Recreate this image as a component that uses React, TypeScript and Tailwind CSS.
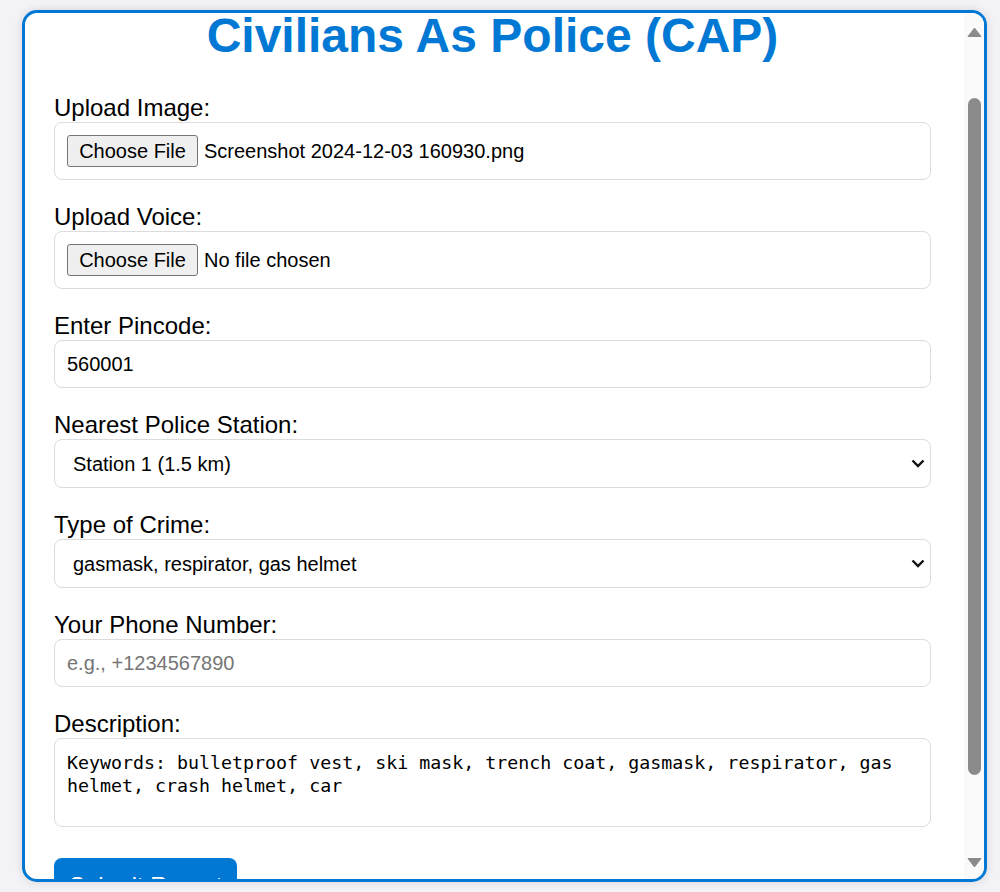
import { useLayoutEffect, useRef } from "react";

const label = "block text-[24px] leading-[28px] text-black";
const box = "w-full border border-[#dcdcdc] rounded-[8px] bg-white text-black outline-none";

function FileField({ name, file }: { name: string; file: string }) {
  return (
    <div>
      <label className={label}>{name}</label>
      <div className={`${box} text-[20px] h-[58px] flex items-center px-[12px] mb-[23px]`}>
        <span className="h-[32px] w-[131px] flex items-center justify-center bg-[#efefef] border border-[#767676] rounded-[3px] text-[20px] text-black">
          Choose File
        </span>
        <span className="ml-[6px] text-[20px]">{file}</span>
      </div>
    </div>
  );
}

function SelectField({ name, value }: { name: string; value: string }) {
  return (
    <div>
      <label className={label}>{name}</label>
      <div className="relative mb-[23px]">
        <select
          defaultValue={value}
          className={`${box} text-[20px] h-[49px] appearance-none pl-[18px] pr-[40px]`}
        >
          <option>{value}</option>
        </select>
        <svg
          className="absolute right-[6px] top-[20px] pointer-events-none"
          width="14"
          height="9"
          viewBox="0 0 14 9"
        >
          <path d="M1.5 1.5 L7 7 L12.5 1.5" fill="none" stroke="#111" strokeWidth="2.4" />
        </svg>
      </div>
    </div>
  );
}

function ScrollBar() {
  return (
    <div className="w-[20px] shrink-0 bg-[#fafafa] flex flex-col items-center">
      <div className="h-[37px] flex items-center">
        <svg width="15" height="10" viewBox="0 0 15 10">
          <path d="M7.5 1 L14 9.5 L1 9.5 Z" fill="#8b8b8b" stroke="#8b8b8b" strokeLinejoin="round" />
        </svg>
      </div>
      <div className="flex-1 w-full flex justify-center">
        <div className="mt-[48px] w-[13px] h-[677px] rounded-full bg-[#8b8b8b]" />
      </div>
      <div className="h-[33px] flex items-center">
        <svg width="15" height="10" viewBox="0 0 15 10">
          <path d="M1 0.5 L14 0.5 L7.5 9 Z" fill="#8b8b8b" stroke="#8b8b8b" strokeLinejoin="round" />
        </svg>
      </div>
    </div>
  );
}

export default function App() {
  const ref = useRef<HTMLDivElement>(null);
  useLayoutEffect(() => {
    if (ref.current) ref.current.scrollTop = 87;
  }, []);

  return (
    <div className="min-h-screen bg-[#f3f3f7] pt-[10px] pl-[22px] font-['Liberation_Sans',Arial,sans-serif]">
      <div className="w-[965px] h-[872px] flex bg-white border-[3px] border-[#0078d4] rounded-[15px] overflow-hidden shadow-[0_0_10px_rgba(0,0,0,0.12)]">
        <div ref={ref} className="flex-1 h-full overflow-hidden">
          <div className="pt-[50px] pb-[64px] pl-[29px] pr-[33px]">
            <h1 className="mt-[32px] mb-[31px] text-center text-[48px] leading-[55px] font-bold text-[#0078d4]">
              Civilians As Police (CAP)
            </h1>

            <FileField name="Upload Image:" file="Screenshot 2024-12-03 160930.png" />
            <FileField name="Upload Voice:" file="No file chosen" />

            <label className={label}>Enter Pincode:</label>
            <input
              className={`${box} text-[20px] h-[48px] px-[12px] mb-[23px]`}
              defaultValue="560001"
            />

            <SelectField name="Nearest Police Station:" value="Station 1 (1.5 km)" />
            <SelectField name="Type of Crime:" value="gasmask, respirator, gas helmet" />

            <label className={label}>Your Phone Number:</label>
            <input
              className={`${box} text-[20px] h-[48px] px-[12px] mb-[23px] placeholder:text-[#767676]`}
              placeholder="e.g., +1234567890"
            />

            <label className={label}>Description:</label>
            <textarea
              className={`${box} block h-[89px] px-[12px] py-[12px] mb-[31px] resize-none font-['DejaVu_Sans_Mono',monospace] text-[18.3px] leading-[23px]`}
              defaultValue="Keywords: bulletproof vest, ski mask, trench coat, gasmask, respirator, gas helmet, crash helmet, car"
            />

            <button className="bg-[#0078d4] text-white text-[24px] leading-[28px] px-[15px] pt-[14px] pb-[14px] rounded-[8px]">
              Submit Report
            </button>
          </div>
        </div>
        <ScrollBar />
      </div>
    </div>
  );
}
